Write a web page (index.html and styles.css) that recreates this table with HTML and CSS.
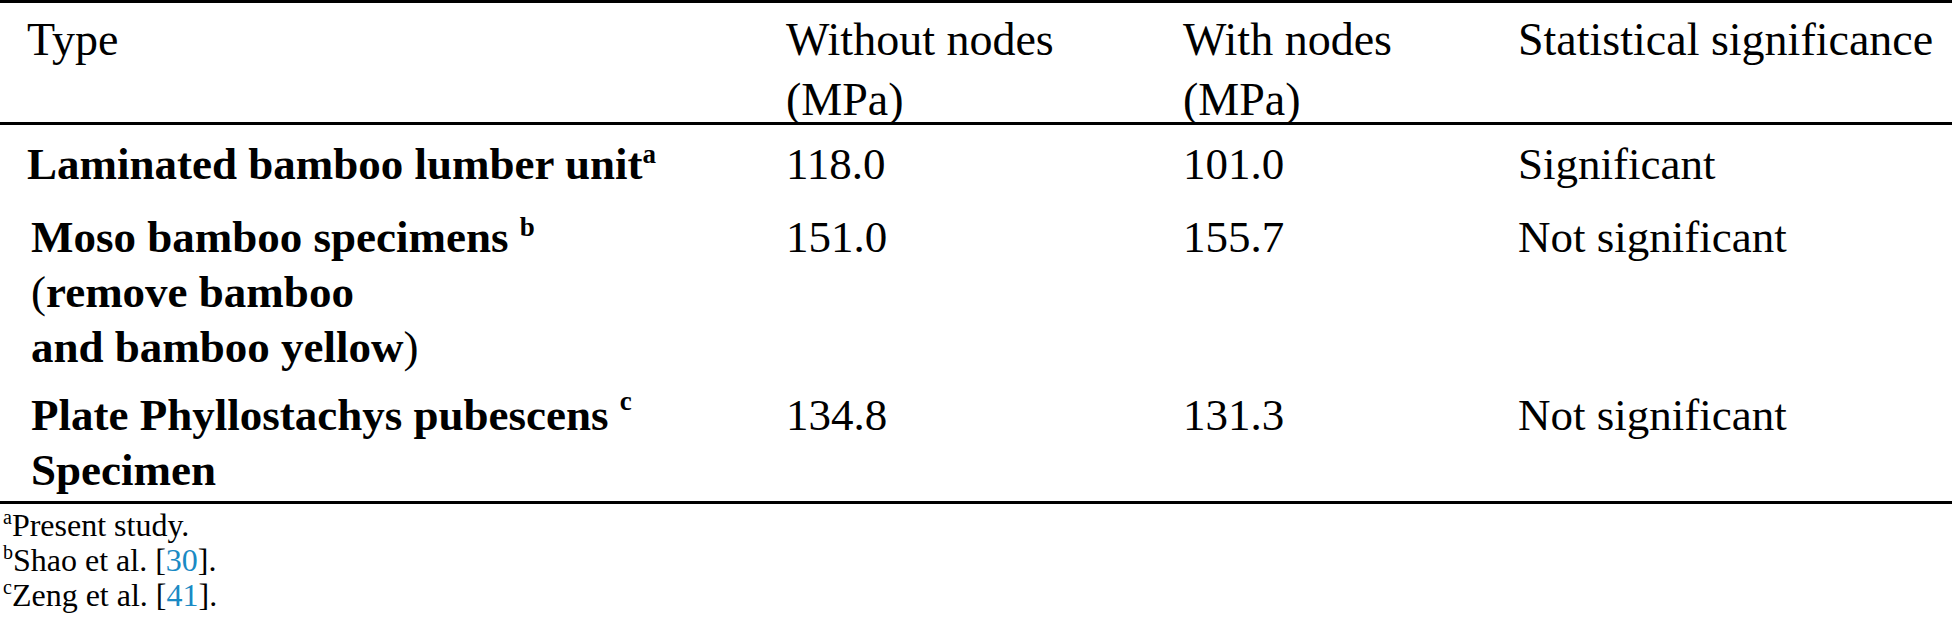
FILE: index.html
```html
<!DOCTYPE html>
<html lang="en">
<head>
    <meta charset="UTF-8">
    <meta name="viewport" content="width=device-width, initial-scale=1.0">
    <title>Compressive strength with and without nodes</title>
    <link rel="stylesheet" href="styles.css">
</head>
<body>
    <table class="data-table">
        <colgroup>
            <col class="col-type">
            <col class="col-without">
            <col class="col-with">
            <col class="col-stat">
        </colgroup>
        <thead>
            <tr>
                <th><div class="head-label">Type</div></th>
                <th><div class="head-label">Without nodes<br>(MPa)</div></th>
                <th><div class="head-label">With nodes<br>(MPa)</div></th>
                <th><div class="head-label">Statistical significance</div></th>
            </tr>
        </thead>
        <tbody>
            <tr>
                <td class="type-name"><strong>Laminated bamboo lumber unit</strong><sup>a</sup></td>
                <td>118.0</td>
                <td>101.0</td>
                <td>Significant</td>
            </tr>
            <tr class="row-tall">
                <td class="type-name indent"><strong>Moso bamboo specimens</strong> <sup>b</sup><br>(<strong>remove bamboo</strong><br><strong>and bamboo yellow</strong>)</td>
                <td>151.0</td>
                <td>155.7</td>
                <td>Not significant</td>
            </tr>
            <tr>
                <td class="type-name indent"><strong>Plate Phyllostachys pubescens</strong> <sup class="high">c</sup><br><strong>Specimen</strong></td>
                <td>134.8</td>
                <td>131.3</td>
                <td>Not significant</td>
            </tr>
        </tbody>
    </table>

    <!-- Notas de rodapé -->
    <div class="footnotes">
        <p><sup>a</sup>Present study.</p>
        <p><sup>b</sup>Shao et al. [<a href="#ref30">30</a>].</p>
        <p><sup>c</sup>Zeng et al. [<a href="#ref41">41</a>].</p>
    </div>
</body>
</html>
```

FILE: styles.css
```css
/* Estilos globais */
body {
    margin: 0;
    background: #ffffff;
    color: #000000;
    font-family: 'Liberation Serif', 'Times New Roman', Times, serif;
}

/* Tabela */
.data-table {
    width: 100%;
    border-collapse: collapse;
    table-layout: fixed;
    border-top: 3px solid #000;
    border-bottom: 3px solid #000;
}

.col-type { width: 786px; }
.col-without { width: 397px; }
.col-with { width: 335px; }

th {
    font-weight: normal;
    font-size: 46px;
    line-height: 60px;
    text-align: left;
    vertical-align: top;
    padding: 7px 0 0 0;
    border-bottom: 3px solid #000;
}

th:first-child {
    padding-left: 27px;
}

/* texto do cabeçalho encosta na linha de baixo */
.head-label {
    margin-bottom: -8px;
}

td {
    font-size: 45px;
    line-height: 55px;
    vertical-align: top;
    padding: 10px 0 3px 0;
}

tbody tr:first-child td {
    padding-top: 12px;
    padding-bottom: 1px;
}

td.type-name {
    padding-left: 27px;
}

td.indent {
    padding-left: 31px;
}

td sup {
    font-weight: bold;
}

.row-tall td {
    padding-top: 17px;
}

sup {
    font-size: 0.6em;
    line-height: 0;
    vertical-align: super;
}

sup.high {
    vertical-align: 20px;
}

/* Notas de rodapé */
.footnotes {
    font-size: 32px;
    line-height: 35px;
    padding: 4px 0 0 3px;
}

.footnotes p {
    margin: 0;
}

.footnotes sup {
    font-size: 20px;
}

.footnotes a {
    color: #1a8ac4;
    text-decoration: none;
}
```
